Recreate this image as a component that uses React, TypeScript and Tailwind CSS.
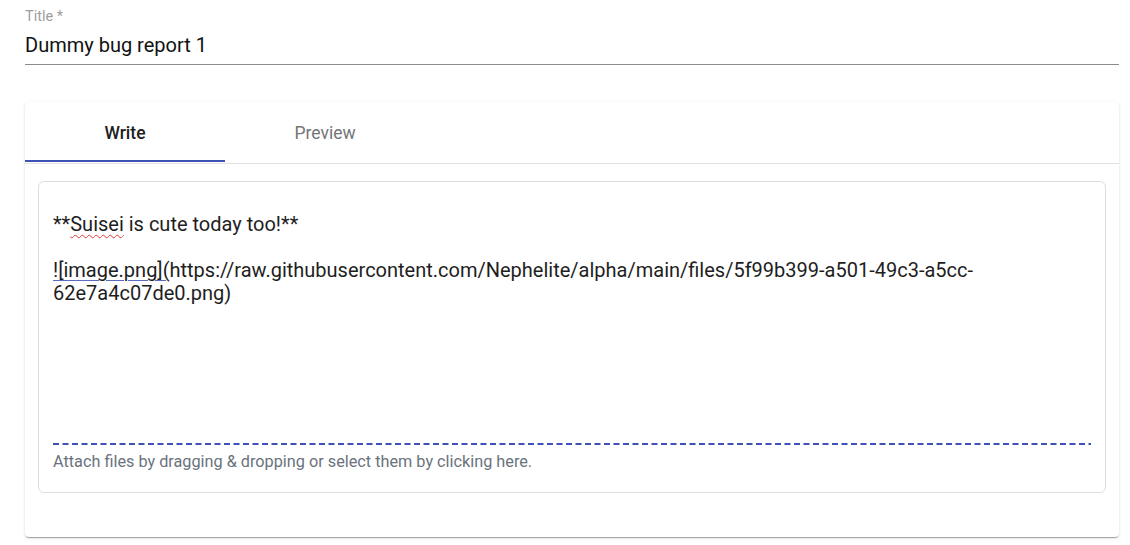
export default function App() {
  return (
    <div className="min-h-[545px] w-[1130px] bg-white pl-[25px] pr-[11px] pt-[8px] font-['Roboto',sans-serif] text-[#212121]">
      {/* title field */}
      <div>
        <label className="block text-[14.5px] leading-[18px] text-[#9e9e9e]">Title *</label>
        <div className="border-b border-[#8c8c8c] pt-[7px] pb-[7px] text-[20px] leading-[24px] text-[#111]">
          Dummy bug report 1
        </div>
      </div>

      {/* editor card */}
      <div className="mt-[37px] rounded bg-white pb-[44px] shadow-[0_2px_1px_-1px_rgba(0,0,0,0.2),0_1px_1px_0_rgba(0,0,0,0.14),0_1px_3px_0_rgba(0,0,0,0.12)]">
        <div className="flex h-[62px] items-start border-b border-[#e0e0e0]">
          <div className="relative flex h-[60px] w-[200px] items-center justify-center pt-[2px] text-[17.5px] font-medium text-[#212121]">
            Write
            <span className="absolute bottom-0 left-0 h-[2px] w-full bg-[#3f51b5]" />
          </div>
          <div className="flex h-[60px] w-[200px] items-center justify-center pt-[2px] text-[17.5px] text-[#757575]">
            Preview
          </div>
        </div>

        <div className="mx-[13px] mt-[17px] rounded-md border border-[#dddddd] pl-[14px] pr-[14px] pb-[20px]">
          <div className="h-[261px] pt-[31px] text-[20px] leading-[23px] text-[#1e1e1e]">
            <div className="whitespace-nowrap">
              **<span className="underline decoration-wavy decoration-[#e53935] decoration-1 underline-offset-[3px]">Suisei</span> is cute today too!**
            </div>
            <div className="h-[23px]" />
            <div className="whitespace-nowrap">
              <span className="underline decoration-[#5c6bc0] decoration-1 underline-offset-[3px]">![image.png](</span>https://raw.githubusercontent.com/Nephelite/alpha/main/files/5f99b399-a501-49c3-a5cc-
            </div>
            <div className="whitespace-nowrap">62e7a4c07de0.png)</div>
          </div>
          <svg className="block h-[2px] w-full" preserveAspectRatio="none">
            <line x1="0" y1="1" x2="100%" y2="1" stroke="#3f51b5" strokeWidth="2" strokeDasharray="6 3.5" />
          </svg>
          <div className="mt-[7px] text-[16.25px] leading-[20px] text-[#6a737d]">
            Attach files by dragging &amp; dropping or select them by clicking here.
          </div>
        </div>
      </div>
    </div>
  );
}
